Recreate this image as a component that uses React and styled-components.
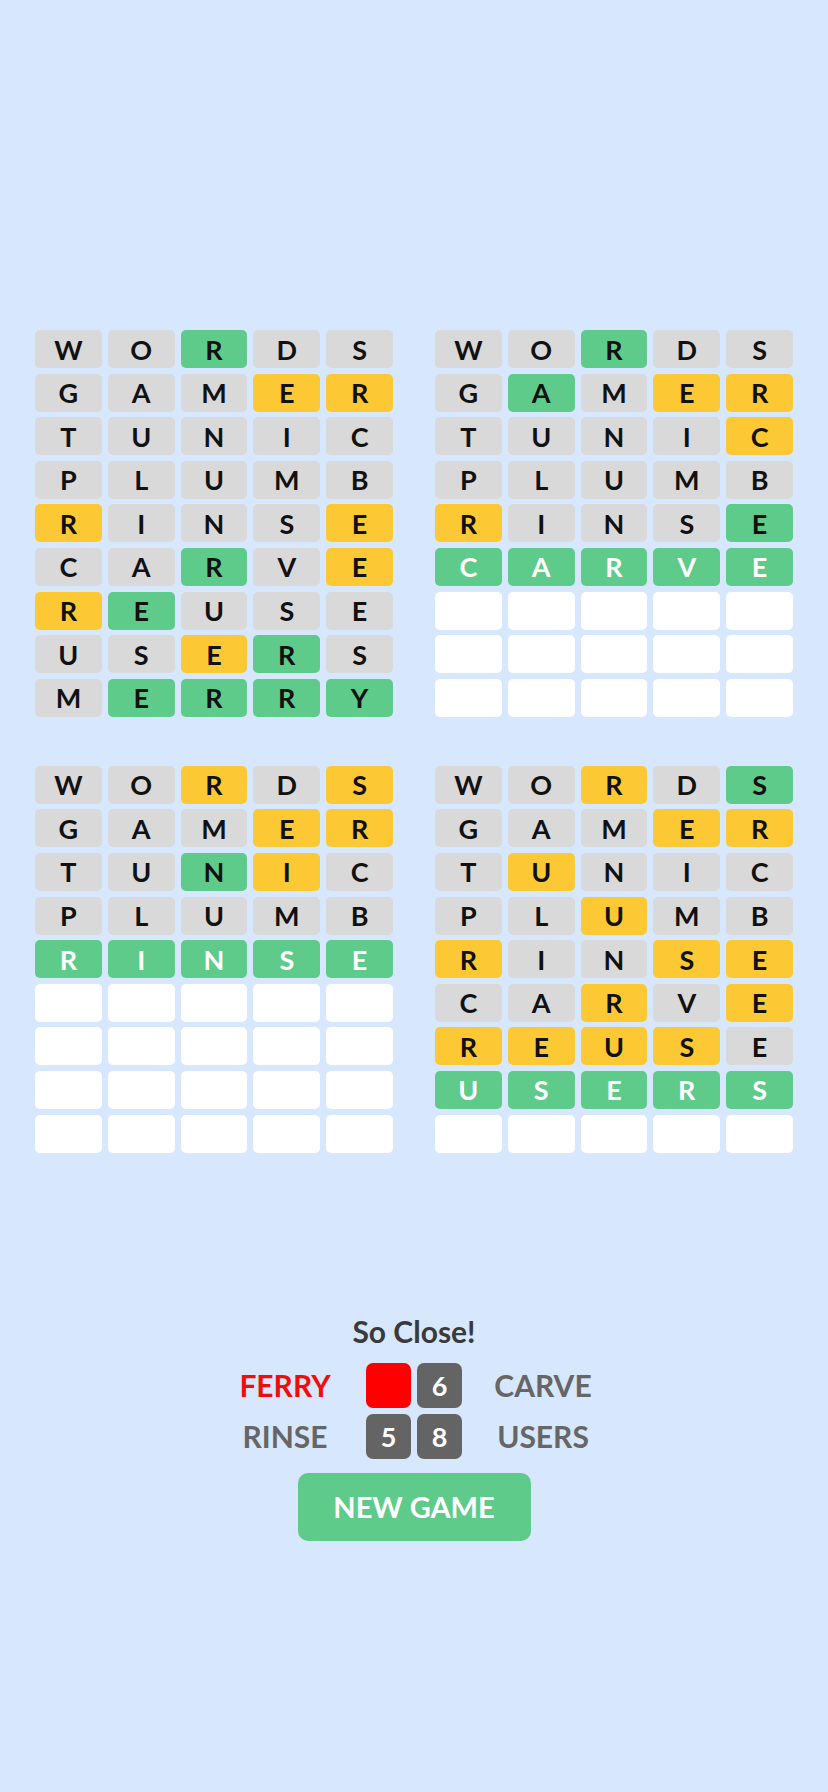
import React from "react";
import styled, { createGlobalStyle } from "styled-components";

const GlobalStyle = createGlobalStyle`
  html, body {
    margin: 0;
    padding: 0;
    background: #d7e7fd;
  }
  body {
    font-family: Lato, "Noto Sans", sans-serif;
  }
  * { box-sizing: border-box; }
`;

const COLORS = {
  g: "#d9d9d9",
  G: "#5ecb8a",
  Y: "#fcc934",
  e: "#ffffff",
};

const Page = styled.div`
  width: 828px;
  min-height: 1792px;
  background: #d7e7fd;
  display: flex;
  flex-direction: column;
  align-items: center;
  padding-top: 330px;
`;

const Boards = styled.div`
  display: grid;
  grid-template-columns: 358px 358px;
  column-gap: 42px;
  row-gap: 49px;
`;

const Board = styled.div`
  display: grid;
  grid-template-columns: repeat(5, 1fr);
  grid-auto-rows: 38px;
  column-gap: 6px;
  row-gap: 5.6px;
`;

const Tile = styled.div`
  background: ${(p) => COLORS[p.$state]};
  border-radius: 5px;
  display: flex;
  align-items: center;
  justify-content: center;
  font-family: Lato, "Noto Sans", sans-serif;
  font-weight: 700;
  font-size: 27px;
  color: ${(p) => (p.$solved ? "#ffffff" : "#111111")};
`;

const Status = styled.div`
  margin-top: 160px;
  display: flex;
  flex-direction: column;
  align-items: center;
`;

const Title = styled.div`
  font-size: 30px;
  line-height: 36px;
  font-weight: 700;
  color: #3a3a3a;
`;

const Score = styled.div`
  margin-top: 14px;
  display: grid;
  grid-template-columns: 130px 96px 130px;
  grid-template-rows: 45px 45px;
  column-gap: 16px;
  row-gap: 6px;
`;

const Label = styled.div`
  display: flex;
  align-items: center;
  justify-content: center;
  font-size: 30px;
  font-weight: 700;
  color: ${(p) => (p.$failed ? "#f20d0d" : "#666666")};
`;

const BoxGrid = styled.div`
  grid-row: span 2;
  display: grid;
  grid-template-columns: 45px 45px;
  grid-template-rows: 45px 45px;
  gap: 6px;
`;

const Box = styled.div`
  background: ${(p) => (p.$failed ? "#ff0000" : "#646464")};
  border-radius: 7px;
  display: flex;
  align-items: center;
  justify-content: center;
  color: #ffffff;
  font-size: 27px;
  font-weight: 700;
`;

const Button = styled.button`
  margin-top: 14px;
  width: 233px;
  height: 68px;
  border: none;
  border-radius: 10px;
  background: #5ecb8a;
  color: #ffffff;
  font-family: Lato, "Noto Sans", sans-serif;
  font-size: 29px;
  font-weight: 700;
  cursor: pointer;
`;

const GUESSES = ["WORDS", "GAMER", "TUNIC", "PLUMB", "RINSE", "CARVE", "REUSE", "USERS", "MERRY"];

const BOARDS = [
  {
    rows: ["ggGgg", "gggYY", "ggggg", "ggggg", "YgggY", "ggGgY", "YGggg", "ggYGg", "gGGGG"],
    solvedAt: -1,
  },
  {
    rows: ["ggGgg", "gGgYY", "ggggY", "ggggg", "YgggG", "GGGGG"],
    solvedAt: 5,
  },
  {
    rows: ["ggYgY", "gggYY", "ggGYg", "ggggg", "GGGGG"],
    solvedAt: 4,
  },
  {
    rows: ["ggYgG", "gggYY", "gYggg", "ggYgg", "YggYY", "ggYgY", "YYYYg", "GGGGG"],
    solvedAt: 7,
  },
];

function BoardView({ board }) {
  const tiles = [];
  for (let r = 0; r < 9; r++) {
    const states = board.rows[r];
    for (let c = 0; c < 5; c++) {
      if (states) {
        tiles.push(
          <Tile key={`${r}-${c}`} $state={states[c]} $solved={r === board.solvedAt}>
            {GUESSES[r][c]}
          </Tile>
        );
      } else {
        tiles.push(<Tile key={`${r}-${c}`} $state="e" />);
      }
    }
  }
  return <Board>{tiles}</Board>;
}

export default function App() {
  return (
    <>
      <GlobalStyle />
      <Page>
        <Boards>
          {BOARDS.map((b, i) => (
            <BoardView key={i} board={b} />
          ))}
        </Boards>
        <Status>
          <Title>So Close!</Title>
          <Score>
            <Label $failed>FERRY</Label>
            <BoxGrid>
              <Box $failed />
              <Box>6</Box>
              <Box>5</Box>
              <Box>8</Box>
            </BoxGrid>
            <Label>CARVE</Label>
            <Label>RINSE</Label>
            <Label>USERS</Label>
          </Score>
          <Button>NEW GAME</Button>
        </Status>
      </Page>
    </>
  );
}
